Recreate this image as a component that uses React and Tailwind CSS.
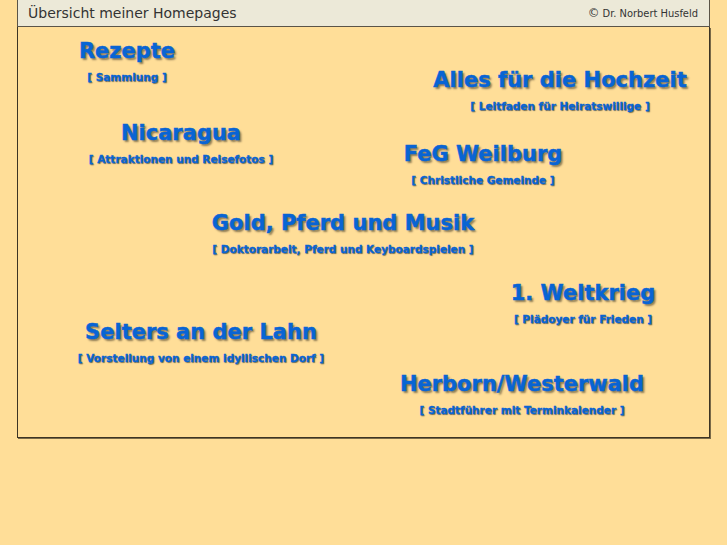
const links = [
    { title: 'Rezepte', sub: '[ Sammlung ]', x: 127, y: 38 },
    { title: 'Alles für die Hochzeit', sub: '[ Leitfaden für Heiratswillige ]', x: 560, y: 67 },
    { title: 'Nicaragua', sub: '[ Attraktionen und Reisefotos ]', x: 181, y: 120 },
    { title: 'FeG Weilburg', sub: '[ Christliche Gemeinde ]', x: 483, y: 141 },
    { title: 'Gold, Pferd und Musik', sub: '[ Doktorarbeit, Pferd und Keyboardspielen ]', x: 343, y: 210 },
    { title: '1. Weltkrieg', sub: '[ Plädoyer für Frieden ]', x: 583, y: 280 },
    { title: 'Selters an der Lahn', sub: '[ Vorstellung von einem idyllischen Dorf ]', x: 201, y: 319 },
    { title: 'Herborn/Westerwald', sub: '[ Stadtführer mit Terminkalender ]', x: 522, y: 371 },
];

export default function App() {
    return (
        <div className="min-h-[545px] bg-[#FFDE98] px-[17px]" style={{ fontFamily: '"DejaVu Sans", Verdana, sans-serif' }}>
            {/* Header bar */}
            <div className="flex h-[27px] items-center justify-between border-x border-b border-[#5a5448] bg-[#ECE9D8] pl-[10px] pr-[11px]">
                <span className="text-[14px] text-[#333]">Übersicht meiner Homepages</span>
                <span className="text-[11px] text-[#333]" style={{ fontFamily: '"DejaVu Sans Condensed", "DejaVu Sans", sans-serif', fontStretch: 'condensed' }}>
                    <span className="mr-[3px] text-[13px]">©</span>Dr. Norbert Husfeld
                </span>
            </div>

            {/* Link map */}
            <div className="relative h-[411px] border-x border-b border-[#3d3424] shadow-[1px_1px_0_#7a6a48]">
                {links.map((l) => (
                    <a
                        key={l.title}
                        href="#"
                        className="absolute flex -translate-x-1/2 flex-col items-center whitespace-nowrap text-[#0864D4]"
                        style={{ left: l.x - 18, top: l.y - 27 }}
                    >
                        <span className="text-[21px] font-bold leading-[26px] [-webkit-text-stroke:0.5px_#0864D4] [text-shadow:2px_2px_2px_rgba(0,0,0,0.45)]">{l.title}</span>
                        <span className="mt-[6px] text-[10.5px] font-bold leading-[14px] [-webkit-text-stroke:0.3px_#0864D4] [text-shadow:1px_1px_1px_rgba(0,0,0,0.5)]">{l.sub}</span>
                    </a>
                ))}
            </div>
        </div>
    );
}
